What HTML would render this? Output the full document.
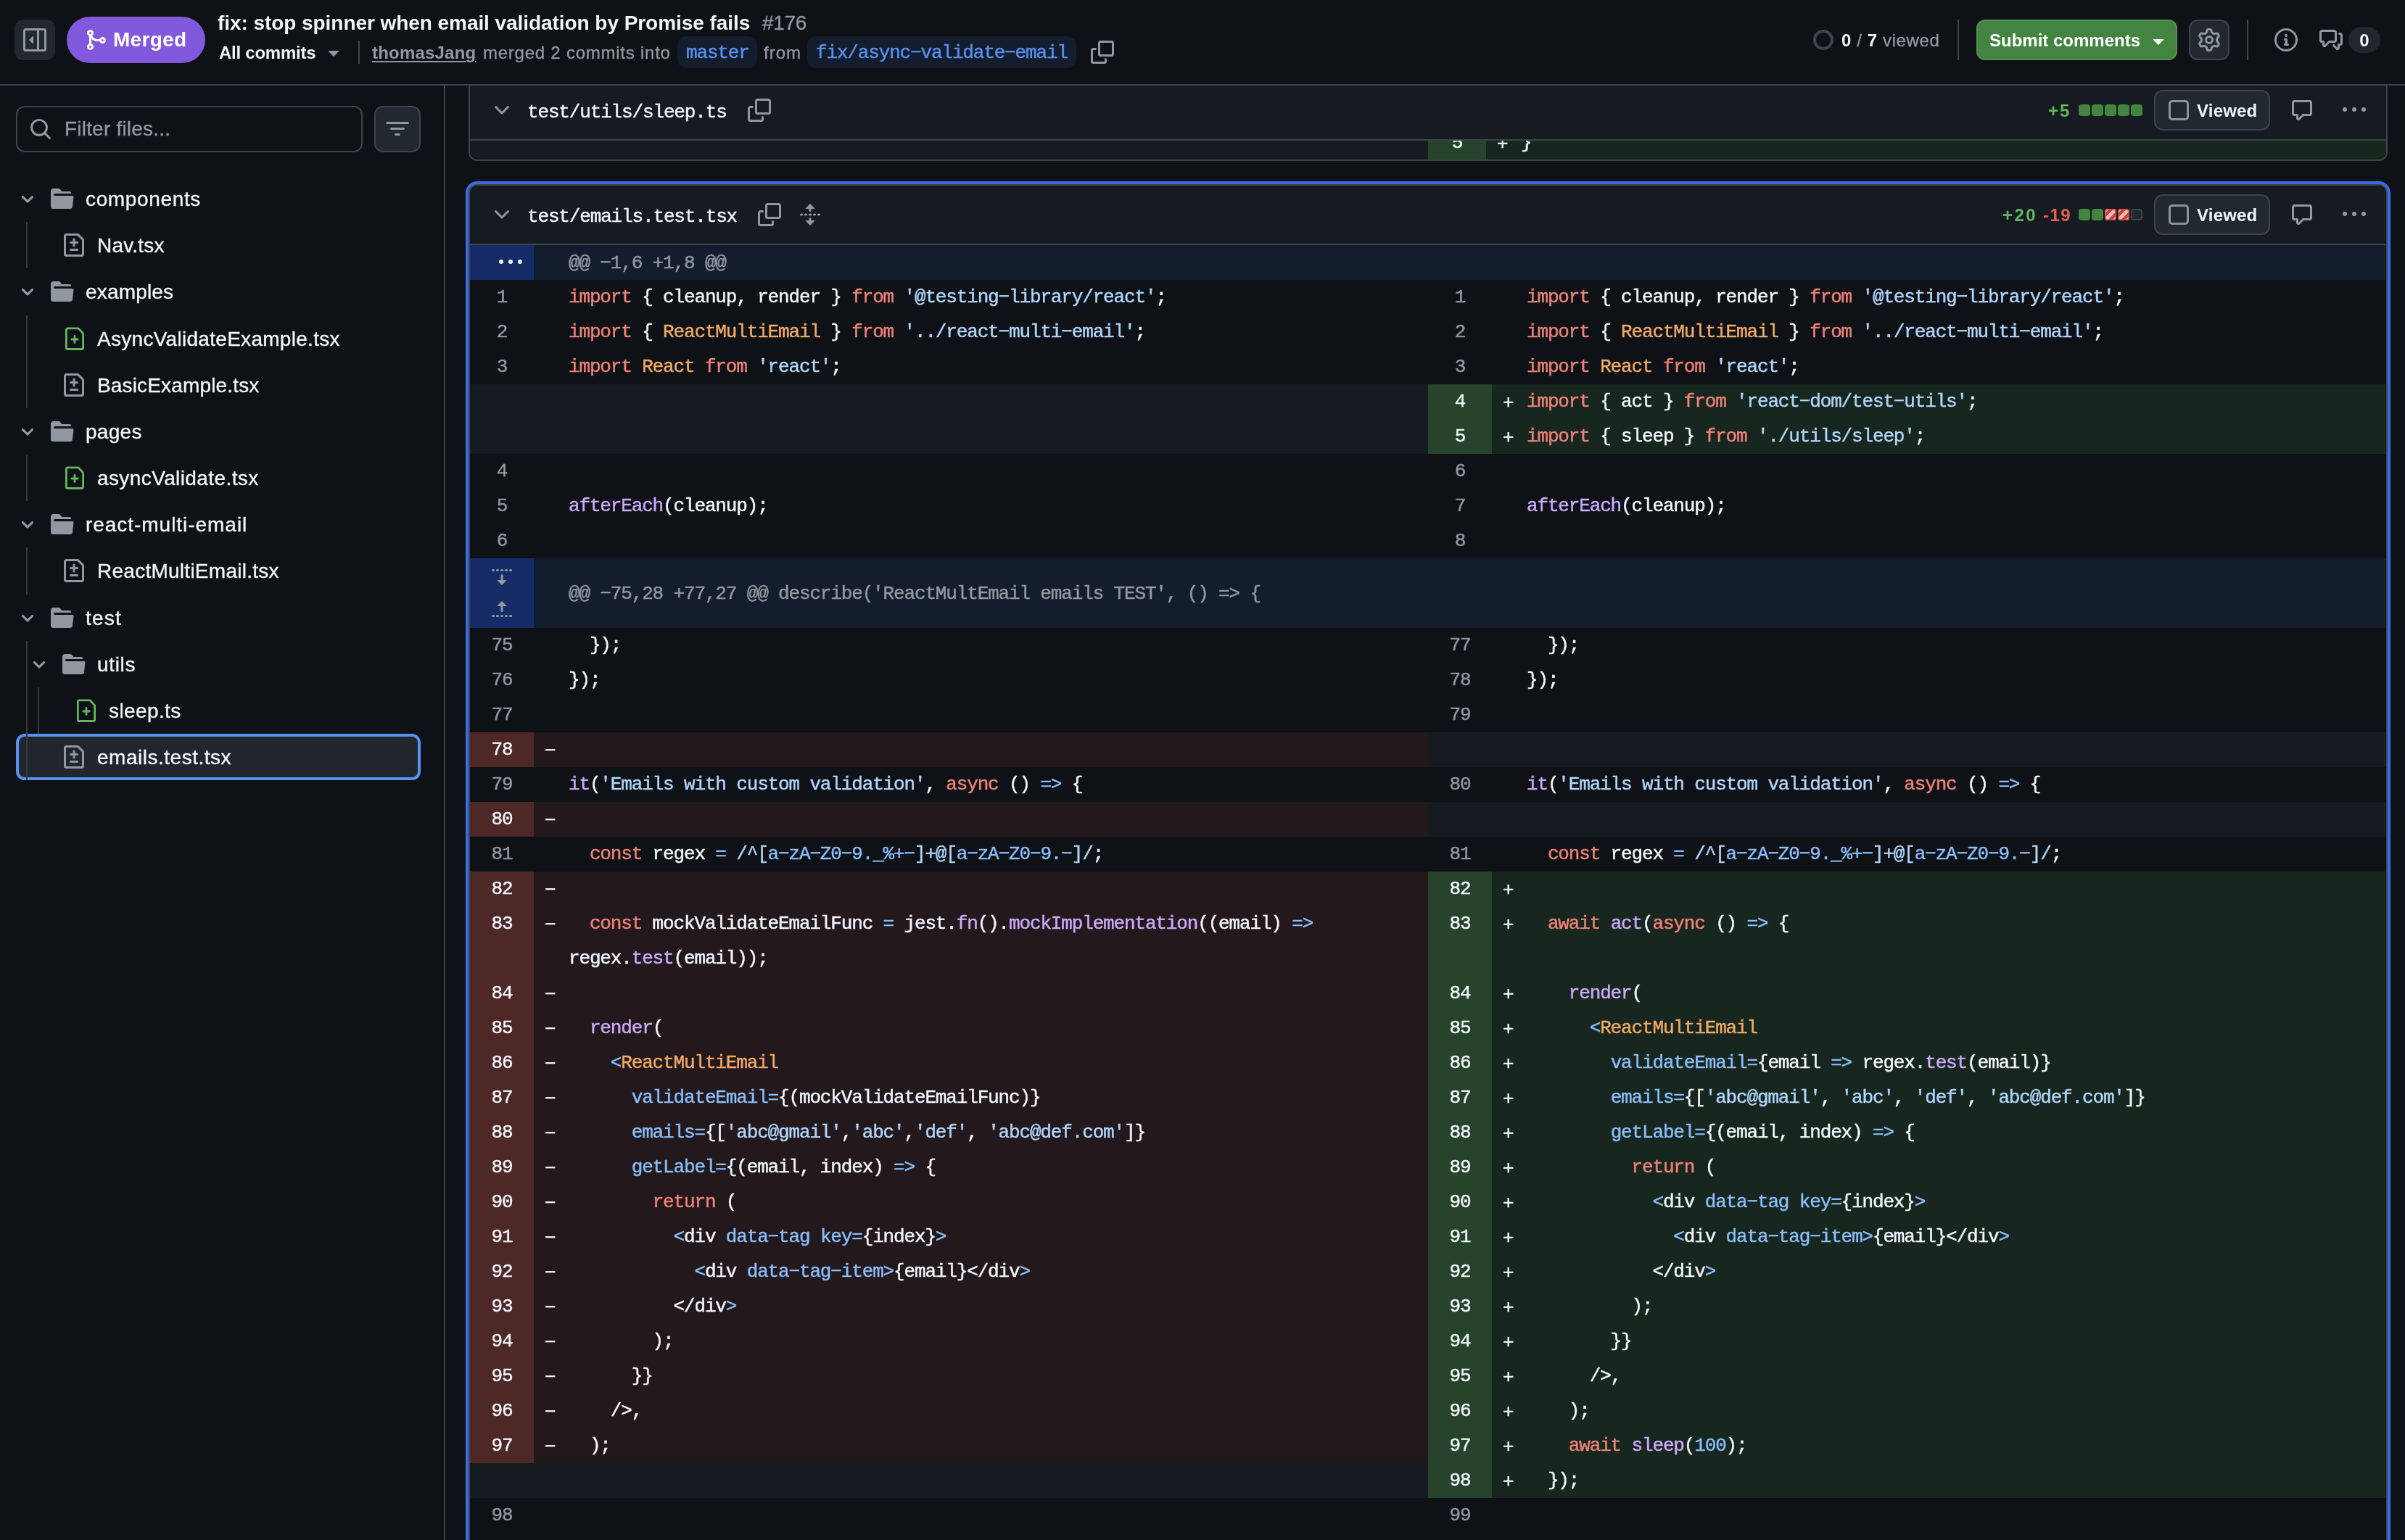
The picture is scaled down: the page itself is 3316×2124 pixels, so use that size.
<!DOCTYPE html>
<html><head><meta charset="utf-8"><title>PR diff</title>
<style>
*{box-sizing:border-box}
html,body{margin:0;padding:0}
body{width:3316px;height:2124px;overflow:hidden;background:#0e1116;color:#f1f6fb;font-family:"Liberation Sans",sans-serif;position:relative}
#app{position:absolute;left:0;top:0;width:3316px;height:2124px;overflow:hidden;will-change:transform;background:#0e1116}
.ab{position:absolute}
.ic{position:absolute;display:block}
.mono{font-family:"Liberation Mono",monospace;-webkit-text-stroke:.45px}
#top{position:absolute;left:0;top:0;width:3316px;height:118px;background:#0e1116;border-bottom:2px solid #3e444c;z-index:10}
.t{position:absolute;white-space:nowrap}
#side{position:absolute;left:0;top:118px;width:614px;height:2006px;border-right:2px solid #3e444c}
.tn{-webkit-text-stroke:.35px;position:absolute;height:64px;line-height:66px;font-size:28px;letter-spacing:.6px;white-space:nowrap;color:#f1f6fb}
.gl{position:absolute;width:2px;background:#343a42}
.sel{position:absolute;left:22px;width:558px;height:64px;background:#21262d;border-radius:12px;box-shadow:inset 0 0 0 4px #5991f1}
.fh{position:absolute;left:0;top:0;width:100%;height:82px;background:#161b22;border-bottom:2px solid #3e444c}
.fn{position:absolute;-webkit-text-stroke:.45px;font-family:"Liberation Mono",monospace;font-size:26px;letter-spacing:-1.15px;white-space:nowrap;color:#f1f6fb}
.vb{position:absolute;width:160px;height:56px;border:2px solid #3e444c;border-radius:12px;background:#22282f}
.vb b{position:absolute;left:18px;top:12px;width:28px;height:28px;border:3px solid #8d939b;border-radius:5px;background:transparent}
.vb span{position:absolute;left:57px;top:1px;line-height:52px;font-size:24px;font-weight:bold;letter-spacing:.2px}
.sq{position:absolute;width:16px;height:16px;border-radius:4px}
.g{background:#438440}
.rd{background:linear-gradient(135deg,#f0b9b5 0 4.6px,#c9453c 4.6px 8.6px,#f0b9b5 8.6px 14px,#c9453c 14px 18px,#f0b9b5 18px);box-shadow:inset 0 0 0 1.5px #c9453c}
.nu{background:#22282f;box-shadow:inset 0 0 0 2px #3e444c}
.r{display:flex;height:48px;width:2642px}
.n{-webkit-text-stroke:.45px;width:88px;flex:none;text-align:center;font-family:"Liberation Mono",monospace;font-size:26px;letter-spacing:-1.15px;line-height:48px;color:#9298a0;position:relative}
.cd{-webkit-text-stroke:.45px;width:1233px;flex:none;position:relative;font-family:"Liberation Mono",monospace;font-size:26px;letter-spacing:-1.15px;line-height:48px;white-space:pre}
.sg{position:absolute;left:15px;top:2px;font-style:normal;line-height:48px}
.tx{position:absolute;left:48px;top:0}
.n.del{background:#4e2727;color:#f1f6fb}
.cd.del{background:#23181c}
.n.add{background:#26432b;color:#f1f6fb}
.cd.add{background:#17261e}
.n.empty,.cd.empty{background:#161b22}
.hk{background:#141d2d}
.hn{background:#152c67}
.hl{-webkit-text-stroke:.45px;position:relative;top:1px;font-family:"Liberation Mono",monospace;font-size:26px;letter-spacing:-1.15px;line-height:48px;color:#9298a0;white-space:pre;padding-left:48px}
.k{color:#ee8277}.e{color:#cbaaf9}.c{color:#89befa}.s{color:#afd5fb}.v{color:#f2aa65}
</style></head>
<body>
<div id="app">

<div id="side" style="top:0;height:2124px"></div>
<div class="ab" style="left:22px;top:146px;width:478px;height:64px;border:2px solid #3e444c;border-radius:12px;background:#0e1116"></div>
<svg class="ic" style="left:40px;top:162px;width:32px;height:32px;fill:#9298a0;" viewBox="0 0 16 16"><path d="M10.680 11.740a6 6 0 0 1-7.922-8.982 6 6 0 0 1 8.982 7.922l3.040 3.040a.749.749 0 0 1-.326 1.275.749.749 0 0 1-.734-.215ZM11.500 7a4.499 4.499 0 1 0-8.997 0A4.499 4.499 0 0 0 11.500 7Z"/></svg>
<div class="t" style="left:89px;top:146px;line-height:64px;font-size:28px;-webkit-text-stroke:.35px;letter-spacing:.2px;color:#9298a0">Filter files...</div>
<div class="ab" style="left:516px;top:146px;width:64px;height:64px;border:2px solid #3e444c;border-radius:12px;background:#22282f"></div>
<svg class="ic" style="left:532px;top:162px;width:32px;height:32px;fill:#9298a0;" viewBox="0 0 16 16"><path d="M.75 3h14.500a.75.75 0 0 1 0 1.500H.75a.75.75 0 0 1 0-1.500ZM3 7.750A.75.75 0 0 1 3.750 7h8.500a.75.75 0 0 1 0 1.500h-8.500A.75.75 0 0 1 3 7.750Zm3 4a.75.75 0 0 1 .75-.750h2.500a.75.75 0 0 1 0 1.500h-2.500a.75.75 0 0 1-.75-.750Z"/></svg>
<svg class="ic" style="left:26px;top:262px;width:24px;height:24px;fill:#9298a0;" viewBox="0 0 12 12"><path d="M6 8.825c-.2 0-.4-.1-.5-.2l-3.300-3.300c-.3-.3-.3-.8 0-1.100.3-.3.8-.3 1.100 0l2.700 2.700 2.700-2.700c.3-.3.8-.3 1.100 0 .3.3.3.8 0 1.100l-3.200 3.200c-.2.2-.4.3-.6.3Z"/></svg>
<svg class="ic" style="left:70px;top:258px;width:32px;height:32px;fill:#9298a0;" viewBox="0 0 16 16"><path d="M.513 1.513A1.750 1.750 0 0 1 1.750 1h3.500c.550 0 1.070.260 1.400.700l.900 1.200a.250.250 0 0 0 .200.100H13a1 1 0 0 1 1 1v.500H2.750a.75.75 0 0 0 0 1.500h11.978a1 1 0 0 1 .994 1.117L15 13.250A1.750 1.750 0 0 1 13.250 15H1.750A1.750 1.750 0 0 1 0 13.250V2.750c0-.464.184-.910.513-1.237Z"/></svg>
<div class="tn" style="left:118px;top:242px;letter-spacing:0.64px">components</div>
<svg class="ic" style="left:86px;top:322px;width:32px;height:32px;fill:#9298a0;" viewBox="0 0 16 16"><path d="M1 1.750C1 .784 1.784 0 2.750 0h7.586c.464 0 .909.184 1.237.513l2.914 2.914c.329.328.513.773.513 1.237v9.586A1.750 1.750 0 0 1 13.250 16H2.750A1.750 1.750 0 0 1 1 14.250Zm1.750-.250a.250.250 0 0 0-.250.250v12.500c0 .138.112.250.250.250h10.500a.250.250 0 0 0 .250-.250V4.664a.250.250 0 0 0-.073-.177l-2.914-2.914a.250.250 0 0 0-.177-.073ZM8 3.250a.75.75 0 0 1 .75.750v1.500h1.500a.75.75 0 0 1 0 1.500h-1.500v1.500a.75.75 0 0 1-1.500 0V7h-1.500a.75.75 0 0 1 0-1.500h1.500V4A.75.75 0 0 1 8 3.250Zm-3 8a.75.75 0 0 1 .75-.750h4.500a.75.75 0 0 1 0 1.500h-4.500a.75.75 0 0 1-.75-.750Z"/></svg>
<div class="tn" style="left:134px;top:306px;letter-spacing:0.22px">Nav.tsx</div>
<svg class="ic" style="left:26px;top:390px;width:24px;height:24px;fill:#9298a0;" viewBox="0 0 12 12"><path d="M6 8.825c-.2 0-.4-.1-.5-.2l-3.300-3.300c-.3-.3-.3-.8 0-1.100.3-.3.8-.3 1.100 0l2.700 2.700 2.700-2.700c.3-.3.8-.3 1.100 0 .3.3.3.8 0 1.100l-3.200 3.200c-.2.2-.4.3-.6.3Z"/></svg>
<svg class="ic" style="left:70px;top:386px;width:32px;height:32px;fill:#9298a0;" viewBox="0 0 16 16"><path d="M.513 1.513A1.750 1.750 0 0 1 1.750 1h3.500c.550 0 1.070.260 1.400.700l.900 1.200a.250.250 0 0 0 .200.100H13a1 1 0 0 1 1 1v.500H2.750a.75.75 0 0 0 0 1.500h11.978a1 1 0 0 1 .994 1.117L15 13.250A1.750 1.750 0 0 1 13.250 15H1.750A1.750 1.750 0 0 1 0 13.250V2.750c0-.464.184-.910.513-1.237Z"/></svg>
<div class="tn" style="left:118px;top:370px;letter-spacing:0.17px">examples</div>
<svg class="ic" style="left:86px;top:451px;width:32px;height:32px;fill:#64b75d;" viewBox="0 0 16 16"><path transform="translate(1.05 .2) scale(.93 .9875)" d="M1 1.750C1 .784 1.784 0 2.750 0h7.586c.464 0 .909.184 1.237.513l2.914 2.914c.329.328.513.773.513 1.237v9.586A1.750 1.750 0 0 1 13.250 16H2.750A1.750 1.750 0 0 1 1 14.250Zm1.750-.250a.250.250 0 0 0-.250.250v12.500c0 .138.112.250.250.250h10.500a.250.250 0 0 0 .250-.250V4.664a.250.250 0 0 0-.073-.177l-2.914-2.914a.250.250 0 0 0-.177-.073ZM8.750 6.150v1.500h1.500a.75.75 0 0 1 0 1.500h-1.500v1.500a.75.75 0 0 1-1.500 0v-1.500h-1.500a.75.75 0 0 1 0-1.500h1.500v-1.500a.75.75 0 0 1 1.500 0Z"/></svg>
<div class="tn" style="left:134px;top:435px;letter-spacing:0.29px">AsyncValidateExample.tsx</div>
<svg class="ic" style="left:86px;top:515px;width:32px;height:32px;fill:#9298a0;" viewBox="0 0 16 16"><path d="M1 1.750C1 .784 1.784 0 2.750 0h7.586c.464 0 .909.184 1.237.513l2.914 2.914c.329.328.513.773.513 1.237v9.586A1.750 1.750 0 0 1 13.250 16H2.750A1.750 1.750 0 0 1 1 14.250Zm1.750-.250a.250.250 0 0 0-.250.250v12.500c0 .138.112.250.250.250h10.500a.250.250 0 0 0 .250-.250V4.664a.250.250 0 0 0-.073-.177l-2.914-2.914a.250.250 0 0 0-.177-.073ZM8 3.250a.75.75 0 0 1 .75.750v1.500h1.500a.75.75 0 0 1 0 1.500h-1.500v1.500a.75.75 0 0 1-1.500 0V7h-1.500a.75.75 0 0 1 0-1.500h1.500V4A.75.75 0 0 1 8 3.250Zm-3 8a.75.75 0 0 1 .75-.750h4.500a.75.75 0 0 1 0 1.500h-4.500a.75.75 0 0 1-.75-.750Z"/></svg>
<div class="tn" style="left:134px;top:499px;letter-spacing:0.16px">BasicExample.tsx</div>
<svg class="ic" style="left:26px;top:583px;width:24px;height:24px;fill:#9298a0;" viewBox="0 0 12 12"><path d="M6 8.825c-.2 0-.4-.1-.5-.2l-3.300-3.300c-.3-.3-.3-.8 0-1.100.3-.3.8-.3 1.100 0l2.700 2.700 2.700-2.700c.3-.3.8-.3 1.100 0 .3.3.3.8 0 1.100l-3.200 3.200c-.2.2-.4.3-.6.3Z"/></svg>
<svg class="ic" style="left:70px;top:579px;width:32px;height:32px;fill:#9298a0;" viewBox="0 0 16 16"><path d="M.513 1.513A1.750 1.750 0 0 1 1.750 1h3.500c.550 0 1.070.260 1.400.700l.900 1.200a.250.250 0 0 0 .200.100H13a1 1 0 0 1 1 1v.500H2.750a.75.75 0 0 0 0 1.500h11.978a1 1 0 0 1 .994 1.117L15 13.250A1.750 1.750 0 0 1 13.250 15H1.750A1.750 1.750 0 0 1 0 13.250V2.750c0-.464.184-.910.513-1.237Z"/></svg>
<div class="tn" style="left:118px;top:563px;letter-spacing:0.3px">pages</div>
<svg class="ic" style="left:86px;top:643px;width:32px;height:32px;fill:#64b75d;" viewBox="0 0 16 16"><path transform="translate(1.05 .2) scale(.93 .9875)" d="M1 1.750C1 .784 1.784 0 2.750 0h7.586c.464 0 .909.184 1.237.513l2.914 2.914c.329.328.513.773.513 1.237v9.586A1.750 1.750 0 0 1 13.250 16H2.750A1.750 1.750 0 0 1 1 14.250Zm1.750-.250a.250.250 0 0 0-.250.250v12.500c0 .138.112.250.250.250h10.500a.250.250 0 0 0 .250-.250V4.664a.250.250 0 0 0-.073-.177l-2.914-2.914a.250.250 0 0 0-.177-.073ZM8.750 6.150v1.500h1.500a.75.75 0 0 1 0 1.500h-1.500v1.500a.75.75 0 0 1-1.500 0v-1.500h-1.500a.75.75 0 0 1 0-1.500h1.500v-1.500a.75.75 0 0 1 1.500 0Z"/></svg>
<div class="tn" style="left:134px;top:627px;letter-spacing:0.4px">asyncValidate.tsx</div>
<svg class="ic" style="left:26px;top:711px;width:24px;height:24px;fill:#9298a0;" viewBox="0 0 12 12"><path d="M6 8.825c-.2 0-.4-.1-.5-.2l-3.300-3.300c-.3-.3-.3-.8 0-1.100.3-.3.8-.3 1.100 0l2.700 2.700 2.700-2.700c.3-.3.8-.3 1.100 0 .3.3.3.8 0 1.100l-3.200 3.200c-.2.2-.4.3-.6.3Z"/></svg>
<svg class="ic" style="left:70px;top:707px;width:32px;height:32px;fill:#9298a0;" viewBox="0 0 16 16"><path d="M.513 1.513A1.750 1.750 0 0 1 1.750 1h3.500c.550 0 1.070.260 1.400.700l.900 1.200a.250.250 0 0 0 .200.100H13a1 1 0 0 1 1 1v.500H2.750a.75.75 0 0 0 0 1.500h11.978a1 1 0 0 1 .994 1.117L15 13.250A1.750 1.750 0 0 1 13.250 15H1.750A1.750 1.750 0 0 1 0 13.250V2.750c0-.464.184-.910.513-1.237Z"/></svg>
<div class="tn" style="left:118px;top:691px;letter-spacing:0.96px">react-multi-email</div>
<svg class="ic" style="left:86px;top:771px;width:32px;height:32px;fill:#9298a0;" viewBox="0 0 16 16"><path d="M1 1.750C1 .784 1.784 0 2.750 0h7.586c.464 0 .909.184 1.237.513l2.914 2.914c.329.328.513.773.513 1.237v9.586A1.750 1.750 0 0 1 13.250 16H2.750A1.750 1.750 0 0 1 1 14.250Zm1.750-.250a.250.250 0 0 0-.250.250v12.500c0 .138.112.250.250.250h10.500a.250.250 0 0 0 .250-.250V4.664a.250.250 0 0 0-.073-.177l-2.914-2.914a.250.250 0 0 0-.177-.073ZM8 3.250a.75.75 0 0 1 .75.750v1.500h1.500a.75.75 0 0 1 0 1.500h-1.500v1.500a.75.75 0 0 1-1.500 0V7h-1.500a.75.75 0 0 1 0-1.500h1.500V4A.75.75 0 0 1 8 3.250Zm-3 8a.75.75 0 0 1 .75-.750h4.500a.75.75 0 0 1 0 1.500h-4.500a.75.75 0 0 1-.75-.750Z"/></svg>
<div class="tn" style="left:134px;top:755px;letter-spacing:0.26px">ReactMultiEmail.tsx</div>
<svg class="ic" style="left:26px;top:840px;width:24px;height:24px;fill:#9298a0;" viewBox="0 0 12 12"><path d="M6 8.825c-.2 0-.4-.1-.5-.2l-3.300-3.300c-.3-.3-.3-.8 0-1.100.3-.3.8-.3 1.100 0l2.700 2.700 2.700-2.700c.3-.3.8-.3 1.100 0 .3.3.3.8 0 1.100l-3.200 3.200c-.2.2-.4.3-.6.3Z"/></svg>
<svg class="ic" style="left:70px;top:836px;width:32px;height:32px;fill:#9298a0;" viewBox="0 0 16 16"><path d="M.513 1.513A1.750 1.750 0 0 1 1.750 1h3.500c.550 0 1.070.260 1.400.700l.900 1.200a.250.250 0 0 0 .200.100H13a1 1 0 0 1 1 1v.500H2.750a.75.75 0 0 0 0 1.500h11.978a1 1 0 0 1 .994 1.117L15 13.250A1.750 1.750 0 0 1 13.250 15H1.750A1.750 1.750 0 0 1 0 13.250V2.750c0-.464.184-.910.513-1.237Z"/></svg>
<div class="tn" style="left:118px;top:820px;letter-spacing:1.23px">test</div>
<svg class="ic" style="left:42px;top:904px;width:24px;height:24px;fill:#9298a0;" viewBox="0 0 12 12"><path d="M6 8.825c-.2 0-.4-.1-.5-.2l-3.300-3.300c-.3-.3-.3-.8 0-1.100.3-.3.8-.3 1.100 0l2.700 2.700 2.700-2.700c.3-.3.8-.3 1.100 0 .3.3.3.8 0 1.100l-3.200 3.200c-.2.2-.4.3-.6.3Z"/></svg>
<svg class="ic" style="left:86px;top:900px;width:32px;height:32px;fill:#9298a0;" viewBox="0 0 16 16"><path d="M.513 1.513A1.750 1.750 0 0 1 1.750 1h3.500c.550 0 1.070.260 1.400.700l.900 1.200a.250.250 0 0 0 .200.100H13a1 1 0 0 1 1 1v.500H2.750a.75.75 0 0 0 0 1.500h11.978a1 1 0 0 1 .994 1.117L15 13.250A1.750 1.750 0 0 1 13.250 15H1.750A1.750 1.750 0 0 1 0 13.250V2.750c0-.464.184-.910.513-1.237Z"/></svg>
<div class="tn" style="left:134px;top:884px;letter-spacing:0.65px">utils</div>
<svg class="ic" style="left:102px;top:964px;width:32px;height:32px;fill:#64b75d;" viewBox="0 0 16 16"><path transform="translate(1.05 .2) scale(.93 .9875)" d="M1 1.750C1 .784 1.784 0 2.750 0h7.586c.464 0 .909.184 1.237.513l2.914 2.914c.329.328.513.773.513 1.237v9.586A1.750 1.750 0 0 1 13.250 16H2.750A1.750 1.750 0 0 1 1 14.250Zm1.750-.250a.250.250 0 0 0-.250.250v12.500c0 .138.112.250.250.250h10.500a.250.250 0 0 0 .250-.250V4.664a.250.250 0 0 0-.073-.177l-2.914-2.914a.250.250 0 0 0-.177-.073ZM8.750 6.150v1.500h1.500a.75.75 0 0 1 0 1.500h-1.500v1.500a.75.75 0 0 1-1.500 0v-1.500h-1.500a.75.75 0 0 1 0-1.500h1.500v-1.500a.75.75 0 0 1 1.500 0Z"/></svg>
<div class="tn" style="left:150px;top:948px;letter-spacing:0.39px">sleep.ts</div>
<div class="sel" style="top:1012px"></div>
<svg class="ic" style="left:86px;top:1028px;width:32px;height:32px;fill:#9298a0;" viewBox="0 0 16 16"><path d="M1 1.750C1 .784 1.784 0 2.750 0h7.586c.464 0 .909.184 1.237.513l2.914 2.914c.329.328.513.773.513 1.237v9.586A1.750 1.750 0 0 1 13.250 16H2.750A1.750 1.750 0 0 1 1 14.250Zm1.750-.250a.250.250 0 0 0-.250.250v12.500c0 .138.112.250.250.250h10.500a.250.250 0 0 0 .250-.250V4.664a.250.250 0 0 0-.073-.177l-2.914-2.914a.250.250 0 0 0-.177-.073ZM8 3.250a.75.75 0 0 1 .75.750v1.500h1.500a.75.75 0 0 1 0 1.500h-1.500v1.500a.75.75 0 0 1-1.500 0V7h-1.500a.75.75 0 0 1 0-1.500h1.500V4A.75.75 0 0 1 8 3.250Zm-3 8a.75.75 0 0 1 .75-.750h4.500a.75.75 0 0 1 0 1.500h-4.500a.75.75 0 0 1-.75-.750Z"/></svg>
<div class="tn" style="left:134px;top:1012px;letter-spacing:0.51px">emails.test.tsx</div>
<div class="gl" style="left:36px;top:306px;height:64px"></div>
<div class="gl" style="left:36px;top:435px;height:128px"></div>
<div class="gl" style="left:36px;top:627px;height:64px"></div>
<div class="gl" style="left:36px;top:755px;height:65px"></div>
<div class="gl" style="left:36px;top:884px;height:192px"></div>
<div class="gl" style="left:52px;top:948px;height:64px"></div>


<!-- file 1 (sleep.ts) -->
<div class="ab" style="left:646px;top:110px;width:2646px;height:112px;border:2px solid #3e444c;border-radius:12px;background:#161b22;overflow:hidden">
  <div class="ab" style="left:0;top:61px;width:2642px"><div class="r"><div class="n empty" style="width:80px"></div><div class="cd empty" style="width:1241px"></div><div class="n add" style="width:80px">5</div><div class="cd add" style="width:1241px"><i class="sg">+</i><span class="tx">}</span></div></div></div>
  <div class="fh"></div>
</div>
<svg class="ic" style="left:676px;top:136px;width:32px;height:32px;fill:#9298a0;" viewBox="0 0 16 16"><path d="M12.780 5.220a.749.749 0 0 1 0 1.060l-4.250 4.250a.749.749 0 0 1-1.060 0L3.220 6.280a.749.749 0 1 1 1.060-1.060L8 8.939l3.720-3.719a.749.749 0 0 1 1.060 0Z"/></svg>
<div class="fn" style="left:727px;top:131px;line-height:48px">test/utils/sleep.ts</div>
<svg class="ic" style="left:1031px;top:136px;width:32px;height:32px;fill:#9298a0;" viewBox="0 0 16 16"><path d="M0 6.75C0 5.784.784 5 1.75 5h1.5a.75.75 0 0 1 0 1.5h-1.5a.25.25 0 0 0-.25.25v7.5c0 .138.112.25.25.25h7.5a.25.25 0 0 0 .25-.25v-1.5a.75.75 0 0 1 1.5 0v1.5A1.75 1.75 0 0 1 9.25 16h-7.5A1.75 1.75 0 0 1 0 14.25Z"/><path d="M5 1.75C5 .784 5.784 0 6.75 0h7.5C15.216 0 16 .784 16 1.75v7.5A1.75 1.75 0 0 1 14.25 11h-7.5A1.75 1.75 0 0 1 5 9.25Zm1.75-.25a.25.25 0 0 0-.25.25v7.5c0 .138.112.25.25.25h7.5a.25.25 0 0 0 .25-.25v-7.5a.25.25 0 0 0-.25-.25Z"/></svg>
<div class="t" style="left:2824px;top:133px;line-height:40px;font-size:24px;font-weight:bold;letter-spacing:2px;color:#64b75d">+5</div>
<div class="sq g" style="left:2866px;top:144px"></div><div class="sq g" style="left:2884px;top:144px"></div><div class="sq g" style="left:2902px;top:144px"></div><div class="sq g" style="left:2920px;top:144px"></div><div class="sq g" style="left:2938px;top:144px"></div>
<div class="vb" style="left:2970px;top:124px"><b></b><span>Viewed</span></div>
<svg class="ic" style="left:3158px;top:136px;width:32px;height:32px;fill:#9298a0;" viewBox="0 0 16 16"><path d="M1 2.750C1 1.784 1.784 1 2.750 1h10.500c.966 0 1.750.784 1.750 1.750v7.500A1.750 1.750 0 0 1 13.250 12H9.060l-2.573 2.573A1.458 1.458 0 0 1 4 13.543V12H2.750A1.750 1.750 0 0 1 1 10.250Zm1.750-.250a.250.250 0 0 0-.250.250v7.500c0 .138.112.250.250.250h2a.75.75 0 0 1 .75.750v2.190l2.720-2.720a.749.749 0 0 1 .530-.220h4.500a.250.250 0 0 0 .250-.250v-7.500a.250.250 0 0 0-.250-.250Z"/></svg>
<svg class="ic" style="left:3230px;top:136px;width:32px;height:32px;fill:#9298a0;" viewBox="0 0 16 16"><path d="M8 9a1.500 1.500 0 1 0 0-3 1.500 1.500 0 0 0 0 3ZM1.500 9a1.500 1.500 0 1 0 0-3 1.500 1.500 0 0 0 0 3Zm13 0a1.500 1.500 0 1 0 0-3 1.500 1.500 0 0 0 0 3Z"/></svg>

<!-- file 2 (emails.test.tsx) -->
<div class="ab" style="left:642px;top:250px;width:2654px;height:1900px;border-radius:16px;background:#386de3"></div>
<div class="ab" style="left:646px;top:254px;width:2646px;height:1900px;border:2px solid #3e444c;border-radius:12px;background:#0e1116;overflow:hidden">
  <div class="fh"></div>
  <div class="ab" style="left:0;top:82px;width:2642px">
    <div class="r hk"><div class="n hn"><svg class="ic" style="left:40px;top:8px;width:32px;height:32px;fill:#f1f6fb;" viewBox="0 0 16 16"><path d="M8 9a1.500 1.500 0 1 0 0-3 1.500 1.500 0 0 0 0 3ZM1.500 9a1.500 1.500 0 1 0 0-3 1.500 1.500 0 0 0 0 3Zm13 0a1.500 1.500 0 1 0 0-3 1.500 1.500 0 0 0 0 3Z"/></svg></div><div class="hl">@@ −1,6 +1,8 @@</div></div>
<div class="r"><div class="n ctx">1</div><div class="cd ctx"><span class="tx"><span class="k">import</span> { cleanup, render } <span class="k">from</span> <span class="s">'@testing−library/react'</span>;</span></div><div class="n ctx">1</div><div class="cd ctx"><span class="tx"><span class="k">import</span> { cleanup, render } <span class="k">from</span> <span class="s">'@testing−library/react'</span>;</span></div></div>
<div class="r"><div class="n ctx">2</div><div class="cd ctx"><span class="tx"><span class="k">import</span> { <span class="v">ReactMultiEmail</span> } <span class="k">from</span> <span class="s">'../react−multi−email'</span>;</span></div><div class="n ctx">2</div><div class="cd ctx"><span class="tx"><span class="k">import</span> { <span class="v">ReactMultiEmail</span> } <span class="k">from</span> <span class="s">'../react−multi−email'</span>;</span></div></div>
<div class="r"><div class="n ctx">3</div><div class="cd ctx"><span class="tx"><span class="k">import</span> <span class="v">React</span> <span class="k">from</span> <span class="s">'react'</span>;</span></div><div class="n ctx">3</div><div class="cd ctx"><span class="tx"><span class="k">import</span> <span class="v">React</span> <span class="k">from</span> <span class="s">'react'</span>;</span></div></div>
<div class="r"><div class="n empty"></div><div class="cd empty"><span class="tx"></span></div><div class="n add">4</div><div class="cd add"><i class="sg">+</i><span class="tx"><span class="k">import</span> { act } <span class="k">from</span> <span class="s">'react−dom/test−utils'</span>;</span></div></div>
<div class="r"><div class="n empty"></div><div class="cd empty"><span class="tx"></span></div><div class="n add">5</div><div class="cd add"><i class="sg">+</i><span class="tx"><span class="k">import</span> { sleep } <span class="k">from</span> <span class="s">'./utils/sleep'</span>;</span></div></div>
<div class="r"><div class="n ctx">4</div><div class="cd ctx"><span class="tx"></span></div><div class="n ctx">6</div><div class="cd ctx"><span class="tx"></span></div></div>
<div class="r"><div class="n ctx">5</div><div class="cd ctx"><span class="tx"><span class="e">afterEach</span>(cleanup);</span></div><div class="n ctx">7</div><div class="cd ctx"><span class="tx"><span class="e">afterEach</span>(cleanup);</span></div></div>
<div class="r"><div class="n ctx">6</div><div class="cd ctx"><span class="tx"></span></div><div class="n ctx">8</div><div class="cd ctx"><span class="tx"></span></div></div>
<div class="r hk" style="height:96px"><div class="n hn"><svg class="ic" style="left:28px;top:8px;width:32px;height:32px;fill:#9298a0;" viewBox="0 0 16 16"><path d="m8.177 14.323 2.896-2.896a.250.250 0 0 0-.177-.427H8.750V7.764a.75.75 0 1 0-1.500 0V11H5.104a.250.250 0 0 0-.177.427l2.896 2.896a.250.250 0 0 0 .354 0ZM2.250 5a.75.75 0 0 0 0-1.500h-.500a.75.75 0 0 0 0 1.500h.500ZM6 4.250a.75.75 0 0 1-.75.750h-.500a.75.75 0 0 1 0-1.500h.500a.75.75 0 0 1 .75.750ZM8.250 5a.75.75 0 0 0 0-1.500h-.500a.75.75 0 0 0 0 1.500h.500ZM12 4.250a.75.75 0 0 1-.75.750h-.500a.75.75 0 0 1 0-1.500h.500a.75.75 0 0 1 .75.750Zm2.250.750a.75.75 0 0 0 0-1.500h-.500a.75.75 0 0 0 0 1.500h.500Z"/></svg><svg class="ic" style="left:28px;top:56px;width:32px;height:32px;fill:#9298a0;" viewBox="0 0 16 16"><path d="M7.823 1.677 4.927 4.573A.250.250 0 0 0 5.104 5H7.250v3.236a.75.75 0 1 0 1.500 0V5h2.146a.250.250 0 0 0 .177-.427L8.177 1.677a.250.250 0 0 0-.354 0ZM13.750 11a.75.75 0 0 0 0 1.500h.500a.75.75 0 0 0 0-1.500h-.500Zm-3.750.750a.75.75 0 0 1 .75-.750h.500a.75.75 0 0 1 0 1.500h-.500a.75.75 0 0 1-.75-.750ZM7.750 11a.75.75 0 0 0 0 1.500h.500a.75.75 0 0 0 0-1.500h-.500ZM4 11.750a.75.75 0 0 1 .75-.750h.500a.75.75 0 0 1 0 1.500h-.500a.75.75 0 0 1-.75-.750ZM1.750 11a.75.75 0 0 0 0 1.500h.500a.75.75 0 0 0 0-1.500h-.500Z"/></svg></div><div class="hl" style="line-height:96px">@@ −75,28 +77,27 @@ describe('ReactMultEmail emails TEST', () =&gt; {</div></div>
<div class="r"><div class="n ctx">75</div><div class="cd ctx"><span class="tx">  });</span></div><div class="n ctx">77</div><div class="cd ctx"><span class="tx">  });</span></div></div>
<div class="r"><div class="n ctx">76</div><div class="cd ctx"><span class="tx">});</span></div><div class="n ctx">78</div><div class="cd ctx"><span class="tx">});</span></div></div>
<div class="r"><div class="n ctx">77</div><div class="cd ctx"><span class="tx"></span></div><div class="n ctx">79</div><div class="cd ctx"><span class="tx"></span></div></div>
<div class="r"><div class="n del">78</div><div class="cd del"><i class="sg">−</i><span class="tx"></span></div><div class="n empty"></div><div class="cd empty"><span class="tx"></span></div></div>
<div class="r"><div class="n ctx">79</div><div class="cd ctx"><span class="tx"><span class="e">it</span>(<span class="s">'Emails with custom validation'</span>, <span class="k">async</span> () <span class="c">=&gt;</span> {</span></div><div class="n ctx">80</div><div class="cd ctx"><span class="tx"><span class="e">it</span>(<span class="s">'Emails with custom validation'</span>, <span class="k">async</span> () <span class="c">=&gt;</span> {</span></div></div>
<div class="r"><div class="n del">80</div><div class="cd del"><i class="sg">−</i><span class="tx"></span></div><div class="n empty"></div><div class="cd empty"><span class="tx"></span></div></div>
<div class="r"><div class="n ctx">81</div><div class="cd ctx"><span class="tx">  <span class="k">const</span> regex <span class="c">=</span> <span class="s">/^[</span><span class="c">a−zA−Z0−9._%+−</span><span class="s">]+@[</span><span class="c">a−zA−Z0−9.−</span><span class="s">]/</span>;</span></div><div class="n ctx">81</div><div class="cd ctx"><span class="tx">  <span class="k">const</span> regex <span class="c">=</span> <span class="s">/^[</span><span class="c">a−zA−Z0−9._%+−</span><span class="s">]+@[</span><span class="c">a−zA−Z0−9.−</span><span class="s">]/</span>;</span></div></div>
<div class="r"><div class="n del">82</div><div class="cd del"><i class="sg">−</i><span class="tx"></span></div><div class="n add">82</div><div class="cd add"><i class="sg">+</i><span class="tx"></span></div></div>
<div class="r" style="height:96px"><div class="n del">83</div><div class="cd del"><i class="sg">−</i><span class="tx">  <span class="k">const</span> mockValidateEmailFunc <span class="c">=</span> jest.<span class="e">fn</span>().<span class="e">mockImplementation</span>((email) <span class="c">=&gt;</span><br>regex.<span class="e">test</span>(email));</span></div><div class="n add">83</div><div class="cd add"><i class="sg">+</i><span class="tx">  <span class="k">await</span> <span class="e">act</span>(<span class="k">async</span> () <span class="c">=&gt;</span> {</span></div></div>
<div class="r"><div class="n del">84</div><div class="cd del"><i class="sg">−</i><span class="tx"></span></div><div class="n add">84</div><div class="cd add"><i class="sg">+</i><span class="tx">    <span class="e">render</span>(</span></div></div>
<div class="r"><div class="n del">85</div><div class="cd del"><i class="sg">−</i><span class="tx">  <span class="e">render</span>(</span></div><div class="n add">85</div><div class="cd add"><i class="sg">+</i><span class="tx">      <span class="c">&lt;</span><span class="v">ReactMultiEmail</span></span></div></div>
<div class="r"><div class="n del">86</div><div class="cd del"><i class="sg">−</i><span class="tx">    <span class="c">&lt;</span><span class="v">ReactMultiEmail</span></span></div><div class="n add">86</div><div class="cd add"><i class="sg">+</i><span class="tx">        <span class="c">validateEmail=</span>{email <span class="c">=&gt;</span> regex.<span class="e">test</span>(email)}</span></div></div>
<div class="r"><div class="n del">87</div><div class="cd del"><i class="sg">−</i><span class="tx">      <span class="c">validateEmail=</span>{(mockValidateEmailFunc)}</span></div><div class="n add">87</div><div class="cd add"><i class="sg">+</i><span class="tx">        <span class="c">emails=</span>{[<span class="s">'abc@gmail'</span>, <span class="s">'abc'</span>, <span class="s">'def'</span>, <span class="s">'abc@def.com'</span>]}</span></div></div>
<div class="r"><div class="n del">88</div><div class="cd del"><i class="sg">−</i><span class="tx">      <span class="c">emails=</span>{[<span class="s">'abc@gmail'</span>,<span class="s">'abc'</span>,<span class="s">'def'</span>, <span class="s">'abc@def.com'</span>]}</span></div><div class="n add">88</div><div class="cd add"><i class="sg">+</i><span class="tx">        <span class="c">getLabel=</span>{(email, index) <span class="c">=&gt;</span> {</span></div></div>
<div class="r"><div class="n del">89</div><div class="cd del"><i class="sg">−</i><span class="tx">      <span class="c">getLabel=</span>{(email, index) <span class="c">=&gt;</span> {</span></div><div class="n add">89</div><div class="cd add"><i class="sg">+</i><span class="tx">          <span class="k">return</span> (</span></div></div>
<div class="r"><div class="n del">90</div><div class="cd del"><i class="sg">−</i><span class="tx">        <span class="k">return</span> (</span></div><div class="n add">90</div><div class="cd add"><i class="sg">+</i><span class="tx">            <span class="c">&lt;</span>div <span class="c">data−tag</span> <span class="c">key=</span>{index}<span class="c">&gt;</span></span></div></div>
<div class="r"><div class="n del">91</div><div class="cd del"><i class="sg">−</i><span class="tx">          <span class="c">&lt;</span>div <span class="c">data−tag</span> <span class="c">key=</span>{index}<span class="c">&gt;</span></span></div><div class="n add">91</div><div class="cd add"><i class="sg">+</i><span class="tx">              <span class="c">&lt;</span>div <span class="c">data−tag−item&gt;</span>{email}&lt;/div<span class="c">&gt;</span></span></div></div>
<div class="r"><div class="n del">92</div><div class="cd del"><i class="sg">−</i><span class="tx">            <span class="c">&lt;</span>div <span class="c">data−tag−item&gt;</span>{email}&lt;/div<span class="c">&gt;</span></span></div><div class="n add">92</div><div class="cd add"><i class="sg">+</i><span class="tx">            &lt;/div<span class="c">&gt;</span></span></div></div>
<div class="r"><div class="n del">93</div><div class="cd del"><i class="sg">−</i><span class="tx">          &lt;/div<span class="c">&gt;</span></span></div><div class="n add">93</div><div class="cd add"><i class="sg">+</i><span class="tx">          );</span></div></div>
<div class="r"><div class="n del">94</div><div class="cd del"><i class="sg">−</i><span class="tx">        );</span></div><div class="n add">94</div><div class="cd add"><i class="sg">+</i><span class="tx">        }}</span></div></div>
<div class="r"><div class="n del">95</div><div class="cd del"><i class="sg">−</i><span class="tx">      }}</span></div><div class="n add">95</div><div class="cd add"><i class="sg">+</i><span class="tx">      /&gt;,</span></div></div>
<div class="r"><div class="n del">96</div><div class="cd del"><i class="sg">−</i><span class="tx">    /&gt;,</span></div><div class="n add">96</div><div class="cd add"><i class="sg">+</i><span class="tx">    );</span></div></div>
<div class="r"><div class="n del">97</div><div class="cd del"><i class="sg">−</i><span class="tx">  );</span></div><div class="n add">97</div><div class="cd add"><i class="sg">+</i><span class="tx">    <span class="k">await</span> <span class="e">sleep</span>(<span class="c">100</span>);</span></div></div>
<div class="r"><div class="n empty"></div><div class="cd empty"><span class="tx"></span></div><div class="n add">98</div><div class="cd add"><i class="sg">+</i><span class="tx">  });</span></div></div>
<div class="r"><div class="n ctx">98</div><div class="cd ctx"><span class="tx"></span></div><div class="n ctx">99</div><div class="cd ctx"><span class="tx"></span></div></div>
<div class="r"><div class="n ctx"></div><div class="cd ctx"><span class="tx"></span></div><div class="n ctx"></div><div class="cd ctx"><span class="tx"></span></div></div>
  </div>
</div>
<svg class="ic" style="left:676px;top:280px;width:32px;height:32px;fill:#9298a0;" viewBox="0 0 16 16"><path d="M12.780 5.220a.749.749 0 0 1 0 1.060l-4.250 4.250a.749.749 0 0 1-1.060 0L3.220 6.280a.749.749 0 1 1 1.060-1.060L8 8.939l3.720-3.719a.749.749 0 0 1 1.060 0Z"/></svg>
<div class="fn" style="left:727px;top:275px;line-height:48px">test/emails.test.tsx</div>
<svg class="ic" style="left:1045px;top:280px;width:32px;height:32px;fill:#9298a0;" viewBox="0 0 16 16"><path d="M0 6.75C0 5.784.784 5 1.75 5h1.5a.75.75 0 0 1 0 1.5h-1.5a.25.25 0 0 0-.25.25v7.5c0 .138.112.25.25.25h7.5a.25.25 0 0 0 .25-.25v-1.5a.75.75 0 0 1 1.5 0v1.5A1.75 1.75 0 0 1 9.25 16h-7.5A1.75 1.75 0 0 1 0 14.25Z"/><path d="M5 1.75C5 .784 5.784 0 6.75 0h7.5C15.216 0 16 .784 16 1.75v7.5A1.75 1.75 0 0 1 14.25 11h-7.5A1.75 1.75 0 0 1 5 9.25Zm1.75-.25a.25.25 0 0 0-.25.25v7.5c0 .138.112.25.25.25h7.5a.25.25 0 0 0 .25-.25v-7.5a.25.25 0 0 0-.25-.25Z"/></svg>
<svg class="ic" style="left:1101px;top:280px;width:32px;height:32px;fill:#9298a0;" viewBox="0 0 16 16"><path d="m8.177.677 2.896 2.896a.250.250 0 0 1-.177.427H8.750v1.250a.75.75 0 0 1-1.500 0V4H5.104a.250.250 0 0 1-.177-.427L7.823.677a.250.250 0 0 1 .354 0ZM7.250 10.750a.75.75 0 0 1 1.500 0V12h2.146a.250.250 0 0 1 .177.427l-2.896 2.896a.250.250 0 0 1-.354 0l-2.896-2.896A.250.250 0 0 1 5.104 12H7.250v-1.250Zm-5-2a.75.75 0 0 0 0-1.500h-.500a.75.75 0 0 0 0 1.500h.500ZM6 8a.75.75 0 0 1-.75.750h-.500a.75.75 0 0 1 0-1.500h.500A.75.75 0 0 1 6 8Zm2.250.750a.75.75 0 0 0 0-1.500h-.500a.75.75 0 0 0 0 1.500h.500ZM12 8a.75.75 0 0 1-.75.750h-.500a.75.75 0 0 1 0-1.500h.500A.75.75 0 0 1 12 8Zm2.250.750a.75.75 0 0 0 0-1.500h-.500a.75.75 0 0 0 0 1.500h.500Z"/></svg>
<div class="t" style="left:2761px;top:277px;line-height:40px;font-size:24px;font-weight:bold;letter-spacing:2.5px;color:#64b75d">+20</div>
<div class="t" style="left:2817px;top:277px;line-height:40px;font-size:24px;font-weight:bold;letter-spacing:1.5px;color:#e55e51">-19</div>
<div class="sq g" style="left:2866px;top:288px"></div><div class="sq g" style="left:2884px;top:288px"></div><div class="sq rd" style="left:2902px;top:288px"></div><div class="sq rd" style="left:2920px;top:288px"></div><div class="sq nu" style="left:2938px;top:288px"></div>
<div class="vb" style="left:2970px;top:268px"><b></b><span>Viewed</span></div>
<svg class="ic" style="left:3158px;top:280px;width:32px;height:32px;fill:#9298a0;" viewBox="0 0 16 16"><path d="M1 2.750C1 1.784 1.784 1 2.750 1h10.500c.966 0 1.750.784 1.750 1.750v7.500A1.750 1.750 0 0 1 13.250 12H9.060l-2.573 2.573A1.458 1.458 0 0 1 4 13.543V12H2.750A1.750 1.750 0 0 1 1 10.250Zm1.750-.250a.250.250 0 0 0-.250.250v7.500c0 .138.112.250.250.250h2a.75.75 0 0 1 .75.750v2.190l2.720-2.720a.749.749 0 0 1 .530-.220h4.500a.250.250 0 0 0 .250-.250v-7.500a.250.250 0 0 0-.250-.250Z"/></svg>
<svg class="ic" style="left:3230px;top:280px;width:32px;height:32px;fill:#9298a0;" viewBox="0 0 16 16"><path d="M8 9a1.500 1.500 0 1 0 0-3 1.500 1.500 0 0 0 0 3ZM1.500 9a1.500 1.500 0 1 0 0-3 1.500 1.500 0 0 0 0 3Zm13 0a1.500 1.500 0 1 0 0-3 1.500 1.500 0 0 0 0 3Z"/></svg>


<div id="top">
 <div class="ab" style="left:20px;top:27px;width:56px;height:56px;border-radius:12px;background:#22282f"></div>
 <svg class="ic" style="left:32px;top:39px;width:32px;height:32px;fill:#9298a0;" viewBox="0 0 16 16"><path d="m4.177 7.823 2.396-2.396A.25.25 0 0 1 7 5.604v4.792a.25.25 0 0 1-.427.177L4.177 8.177a.25.25 0 0 1 0-.354Z"/><path d="M0 1.75C0 .784.784 0 1.75 0h12.5C15.216 0 16 .784 16 1.75v12.5A1.75 1.75 0 0 1 14.25 16H1.75A1.75 1.75 0 0 1 0 14.25Zm1.75-.25a.25.25 0 0 0-.25.25v12.5c0 .138.112.25.25.25H9.5v-13Zm12.5 13a.25.25 0 0 0 .25-.25V1.75a.25.25 0 0 0-.25-.25H11v13Z"/></svg>
 <div class="ab" style="left:92px;top:23px;width:191px;height:64px;border-radius:32px;background:#8259dd"></div>
 <svg class="ic" style="left:116px;top:39px;width:32px;height:32px;fill:#ffffff;" viewBox="0 0 16 16"><path d="M5.45 5.154A4.25 4.25 0 0 0 9.25 7.5h1.378a2.251 2.251 0 1 1 0 1.5H9.25A5.734 5.734 0 0 1 5 7.123v3.505a2.25 2.25 0 1 1-1.5 0V5.372a2.25 2.25 0 1 1 1.95-.218ZM4.25 13.5a.75.75 0 1 0 0-1.5.75.75 0 0 0 0 1.5Zm8.5-4.5a.75.75 0 1 0 0-1.5.75.75 0 0 0 0 1.5ZM5 3.25a.75.75 0 1 0 0 .005V3.25Z"/></svg>
 <div class="t" style="left:156px;top:23px;line-height:64px;font-size:28px;font-weight:bold;letter-spacing:.3px;color:#fff">Merged</div>
 <div class="t" style="left:300px;top:12px;line-height:40px;font-size:28px;font-weight:bold;letter-spacing:-.06px">fix: stop spinner when email validation by Promise fails</div>
 <div class="t" style="left:1051px;top:12px;line-height:40px;font-size:28px;-webkit-text-stroke:.35px;letter-spacing:-.3px;color:#9298a0">#176</div>
 <div class="t" style="left:302px;top:53px;line-height:40px;font-size:24px;font-weight:bold;letter-spacing:-.25px">All commits</div>
 <svg class="ic" style="left:444px;top:56px;width:32px;height:32px;fill:#9298a0;" viewBox="0 0 16 16"><path d="m4.427 7.427 3.396 3.396a.25.25 0 0 0 .354 0l3.396-3.396A.25.25 0 0 0 11.396 7H4.604a.25.25 0 0 0-.177.427Z"/></svg>
 <div class="ab" style="left:494px;top:56px;width:2px;height:32px;background:#3e444c"></div>
 <div class="t" style="left:513px;top:53px;line-height:40px;font-size:24px;font-weight:bold;letter-spacing:.2px;color:#9298a0;text-decoration:underline;text-underline-offset:3px;text-decoration-thickness:2px">thomasJang</div>
 <div class="t" style="left:666px;top:53px;line-height:40px;font-size:24px;-webkit-text-stroke:.35px;letter-spacing:.76px;color:#9298a0">merged 2 commits into</div>
 <div class="ab" style="left:934px;top:50px;width:110px;height:44px;border-radius:12px;background:#141d2d"></div>
 <div class="t mono" style="left:946px;top:50px;line-height:46px;font-size:26px;letter-spacing:-1.15px;color:#5991f1">master</div>
 <div class="t" style="left:1053px;top:53px;line-height:40px;font-size:24px;-webkit-text-stroke:.35px;letter-spacing:1px;color:#9298a0">from</div>
 <div class="ab" style="left:1113px;top:50px;width:371px;height:44px;border-radius:12px;background:#141d2d"></div>
 <div class="t mono" style="left:1125px;top:50px;line-height:46px;font-size:26px;letter-spacing:-1.15px;color:#5991f1">fix/async−validate−email</div>
 <svg class="ic" style="left:1504px;top:56px;width:32px;height:32px;fill:#9298a0;" viewBox="0 0 16 16"><path d="M0 6.75C0 5.784.784 5 1.75 5h1.5a.75.75 0 0 1 0 1.5h-1.5a.25.25 0 0 0-.25.25v7.5c0 .138.112.25.25.25h7.5a.25.25 0 0 0 .25-.25v-1.5a.75.75 0 0 1 1.5 0v1.5A1.75 1.75 0 0 1 9.25 16h-7.5A1.75 1.75 0 0 1 0 14.25Z"/><path d="M5 1.75C5 .784 5.784 0 6.75 0h7.5C15.216 0 16 .784 16 1.75v7.5A1.75 1.75 0 0 1 14.25 11h-7.5A1.75 1.75 0 0 1 5 9.25Zm1.75-.25a.25.25 0 0 0-.25.25v7.5c0 .138.112.25.25.25h7.5a.25.25 0 0 0 .25-.25v-7.5a.25.25 0 0 0-.25-.25Z"/></svg>
 <div class="ab" style="left:2500px;top:41px;width:28px;height:28px;border-radius:50%;border:4px solid #3e444c"></div>
 <div class="t" style="left:2539px;top:36px;line-height:40px;font-size:24px;letter-spacing:.6px;color:#9298a0"><b style="color:#f1f6fb">0</b> <span style="-webkit-text-stroke:.35px">/</span> <b style="color:#f1f6fb">7</b> <span style="-webkit-text-stroke:.35px">viewed</span></div>
 <div class="ab" style="left:2699px;top:27px;width:2px;height:56px;background:#3e444c"></div>
 <div class="ab" style="left:2725px;top:27px;width:277px;height:56px;border-radius:12px;background:#438440;box-shadow:inset 0 0 0 2px rgba(240,246,252,.1)"></div>
 <div class="t" style="left:2743px;top:36px;line-height:40px;font-size:24px;font-weight:bold;color:#fff">Submit comments</div>
 <svg class="ic" style="left:2960px;top:40px;width:32px;height:32px;fill:#ffffff;" viewBox="0 0 16 16"><path d="m4.427 7.427 3.396 3.396a.25.25 0 0 0 .354 0l3.396-3.396A.25.25 0 0 0 11.396 7H4.604a.25.25 0 0 0-.177.427Z"/></svg>
 <div class="ab" style="left:3018px;top:27px;width:56px;height:56px;border-radius:12px;background:#22282f;border:2px solid #3e444c"></div>
 <svg class="ic" style="left:3030px;top:39px;width:32px;height:32px;fill:#9298a0;" viewBox="0 0 16 16"><path d="M8 0a8.2 8.2 0 0 1 .701.031C9.444.095 9.99.645 10.16 1.29l.288 1.107c.018.066.079.158.212.224.231.114.454.243.668.386.123.082.233.09.299.071l1.103-.303c.644-.176 1.392.021 1.82.63.27.385.506.792.704 1.218.315.675.111 1.422-.364 1.891l-.814.806c-.049.048-.098.147-.088.294.016.257.016.515 0 .772-.01.147.038.246.088.294l.814.806c.475.469.679 1.216.364 1.891a7.977 7.977 0 0 1-.704 1.217c-.428.61-1.176.807-1.82.63l-1.102-.302c-.067-.019-.177-.011-.3.071a5.909 5.909 0 0 1-.668.386c-.133.066-.194.158-.211.224l-.29 1.106c-.168.646-.715 1.196-1.458 1.26a8.006 8.006 0 0 1-1.402 0c-.743-.064-1.289-.614-1.458-1.26l-.289-1.106c-.018-.066-.079-.158-.212-.224a5.738 5.738 0 0 1-.668-.386c-.123-.082-.233-.09-.299-.071l-1.103.303c-.644.176-1.392-.021-1.82-.63a8.12 8.12 0 0 1-.704-1.218c-.315-.675-.111-1.422.363-1.891l.815-.806c.05-.048.098-.147.088-.294a6.214 6.214 0 0 1 0-.772c.01-.147-.038-.246-.088-.294l-.815-.806C.635 6.045.431 5.298.746 4.623a7.92 7.92 0 0 1 .704-1.217c.428-.61 1.176-.807 1.82-.63l1.102.302c.067.019.177.011.3-.071.214-.143.437-.272.668-.386.133-.066.194-.158.211-.224l.29-1.106C6.009.645 6.556.095 7.299.03 7.53.01 7.764 0 8 0Zm-.571 1.525c-.036.003-.108.036-.137.146l-.289 1.105c-.147.561-.549.967-.998 1.189-.173.086-.34.183-.5.29-.417.278-.97.423-1.529.27l-1.103-.303c-.109-.03-.175.016-.195.045-.22.312-.412.644-.573.99-.014.031-.021.11.059.19l.815.806c.411.406.562.957.53 1.456a4.709 4.709 0 0 0 0 .582c.032.499-.119 1.05-.53 1.456l-.815.806c-.081.08-.073.159-.059.19.162.346.353.677.573.989.02.03.085.076.195.046l1.102-.303c.56-.153 1.113-.008 1.53.27.161.107.328.204.501.29.447.222.85.629.997 1.189l.289 1.105c.029.109.101.143.137.146a6.6 6.6 0 0 0 1.142 0c.036-.003.108-.036.137-.146l.289-1.105c.147-.561.549-.967.998-1.189.173-.086.34-.183.5-.29.417-.278.97-.423 1.529-.27l1.103.303c.109.029.175-.016.195-.045.22-.313.411-.644.573-.99.014-.031.021-.11-.059-.19l-.815-.806c-.411-.406-.562-.957-.53-1.456a4.709 4.709 0 0 0 0-.582c-.032-.499.119-1.05.53-1.456l.815-.806c.081-.08.073-.159.059-.19a6.464 6.464 0 0 0-.573-.989c-.02-.03-.085-.076-.195-.046l-1.102.303c-.56.153-1.113.008-1.53-.27a4.44 4.44 0 0 0-.501-.29c-.447-.222-.85-.629-.997-1.189l-.289-1.105c-.029-.11-.101-.143-.137-.146a6.6 6.6 0 0 0-1.142 0ZM11 8a3 3 0 1 1-6 0 3 3 0 0 1 6 0ZM9.500 8a1.500 1.500 0 1 0-3.001.001A1.500 1.500 0 0 0 9.500 8Z"/></svg>
 <div class="ab" style="left:3098px;top:27px;width:2px;height:56px;background:#3e444c"></div>
 <svg class="ic" style="left:3136px;top:39px;width:32px;height:32px;fill:#9298a0;" viewBox="0 0 16 16"><path d="M0 8a8 8 0 1 1 16 0A8 8 0 0 1 0 8Zm8-6.500a6.500 6.500 0 1 0 0 13 6.500 6.500 0 0 0 0-13ZM6.500 7.750A.75.75 0 0 1 7.250 7h1a.75.75 0 0 1 .75.750v2.750h.250a.75.75 0 0 1 0 1.500h-2a.75.75 0 0 1 0-1.500h.250v-2h-.250a.75.75 0 0 1-.75-.750ZM8 6a1 1 0 1 1 0-2 1 1 0 0 1 0 2Z"/></svg>
 <svg class="ic" style="left:3198px;top:39px;width:32px;height:32px;fill:#9298a0;" viewBox="0 0 16 16"><path d="M1.75 1h8.500c.966 0 1.750.784 1.750 1.750v5.500A1.750 1.750 0 0 1 10.250 10H7.061l-2.574 2.573A1.458 1.458 0 0 1 2 11.543V10h-.250A1.750 1.750 0 0 1 0 8.250v-5.500C0 1.784.784 1 1.750 1ZM1.500 2.750v5.500c0 .138.112.250.250.250h1a.75.75 0 0 1 .75.750v2.190l2.720-2.720a.749.749 0 0 1 .530-.220h3.500a.250.250 0 0 0 .250-.250v-5.500a.250.250 0 0 0-.250-.250h-8.500a.250.250 0 0 0-.250.250Zm13 2a.250.250 0 0 0-.250-.250h-.500a.75.75 0 0 1 0-1.500h.500c.966 0 1.750.784 1.750 1.750v5.500A1.750 1.750 0 0 1 14.250 12H14v1.543a1.458 1.458 0 0 1-2.487 1.030L9.220 12.280a.749.749 0 0 1 .326-1.275.749.749 0 0 1 .734.215l2.220 2.220v-2.190a.75.75 0 0 1 .75-.750h1a.250.250 0 0 0 .250-.250Z"/></svg>
 <div class="ab" style="left:3238px;top:37px;width:44px;height:36px;border-radius:18px;background:#22262d"></div>
 <div class="t" style="left:3238px;top:37px;width:44px;text-align:center;line-height:37px;font-size:24px;font-weight:bold">0</div>
</div>

</div>
</body></html>
